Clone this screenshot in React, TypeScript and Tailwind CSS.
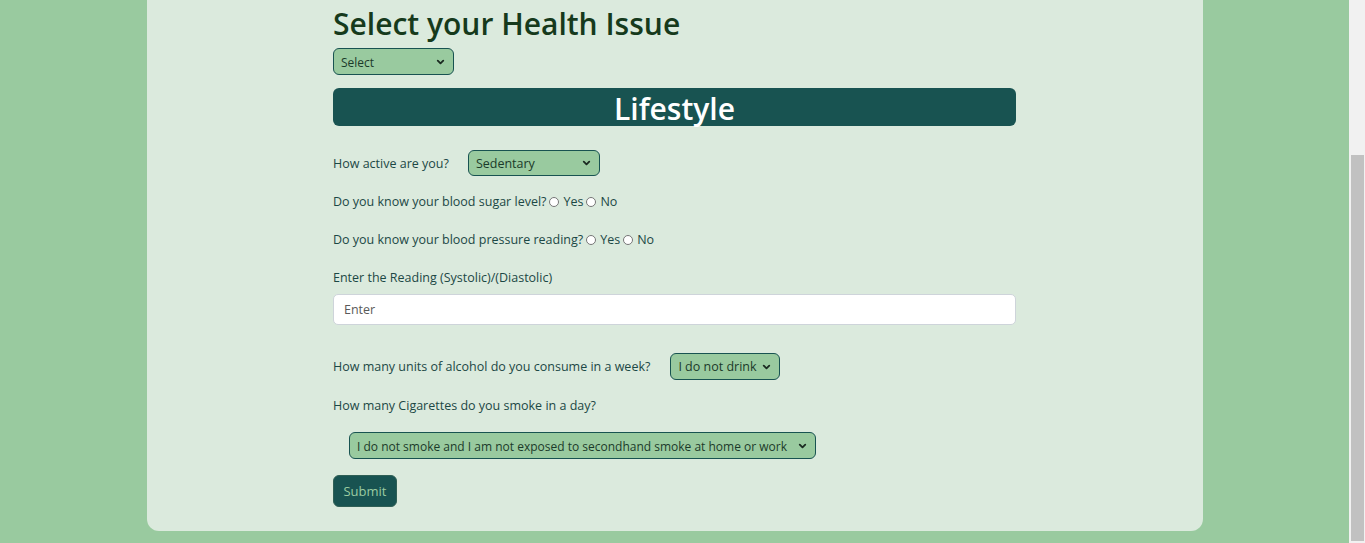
import { ChevronDown } from 'lucide-react';

const font = { fontFamily: '"Segoe UI", "Open Sans", sans-serif' };

const Dropdown = ({ value, options, className }: { value: string; options: string[]; className: string }) => (
  <div className={`relative ${className}`}>
    <select
      defaultValue={value}
      className="w-full h-full appearance-none bg-[#99ca9f] border border-[#185351] rounded-[6px] pl-[7px] pr-[20px] pt-[2px] text-[#1b3a2a] outline-none"
    >
      {options.map((o) => (
        <option key={o}>{o}</option>
      ))}
    </select>
    <ChevronDown
      className="absolute right-[8px] top-1/2 -translate-y-1/2 w-[11px] h-[11px] text-[#1b2b22] pointer-events-none"
      strokeWidth={4}
    />
  </div>
);

const Radio = ({ name, label }: { name: string; label: string }) => (
  <label className="inline-flex items-center">
    <input
      type="radio"
      name={name}
      className="appearance-none w-[10px] h-[10px] rounded-full border border-[#767676] bg-white mx-[3px] -mt-[1px]"
    />
    <span className="ml-[1px]">{label}</span>
  </label>
);

export default function App() {
  return (
    <div className="flex h-[543px] overflow-hidden" style={font}>
      <div className="flex-1 bg-[#99ca9f]">
        <div className="mx-auto w-[1056px] bg-[#dbeadd] rounded-b-[12px] pb-[24px]">
          <div className="mx-auto w-[683px] text-[12.5px] text-[#1c4845]">
            <h1 className="text-[30px] leading-[46px] font-semibold text-[#163a1c] pt-[1px] -mb-[1px]">Select your Health Issue</h1>

            <Dropdown value="Select" options={['Select', 'Diabetes', 'Hypertension']} className="mt-[2px] w-[121px] h-[27px] text-[12px]" />

            <div className="mt-[13px] h-[38px] bg-[#185351] rounded-[6px] flex items-center justify-center">
              <h2 className="text-[30px] font-semibold text-white leading-none mt-[4px]">Lifestyle</h2>
            </div>

            <div className="mt-[24px] h-[26px] flex items-center gap-[19px] pt-[2px]">
              <span>How active are you?</span>
              <Dropdown value="Sedentary" options={['Sedentary', 'Lightly active', 'Active', 'Very active']} className="w-[132px] h-[26px] text-[12.5px] -mt-[2px]" />
            </div>

            <div className="mt-[16px] h-[20px] flex items-center pt-[1px]">
              <span>Do you know your blood sugar level?</span>
              <Radio name="sugar" label="Yes" />
              <Radio name="sugar" label="No" />
            </div>

            <div className="mt-[18px] h-[20px] flex items-center pt-[1px]">
              <span>Do you know your blood pressure reading?</span>
              <Radio name="pressure" label="Yes" />
              <Radio name="pressure" label="No" />
            </div>

            <div className="mt-[18px] h-[20px] flex items-center pt-[1px]">Enter the Reading (Systolic)/(Diastolic)</div>

            <input
              placeholder="Enter"
              className="mt-[6px] w-full h-[31px] bg-white border border-[#ced4da] rounded-[5px] px-[10px] text-[12.5px] placeholder:text-[#5a5a5a] outline-none"
            />

            <div className="mt-[28px] h-[27px] flex items-center gap-[20px]">
              <span className="pt-[2px]">How many units of alcohol do you consume in a week?</span>
              <Dropdown value="I do not drink" options={['I do not drink', '1-7 units', '8-14 units', 'More than 14']} className="w-[110px] h-[27px] text-[12.5px]" />
            </div>

            <div className="mt-[16px] h-[20px] flex items-center pt-[1px]">How many Cigarettes do you smoke in a day?</div>

            <Dropdown
              value="I do not smoke and I am not exposed to secondhand smoke at home or work"
              options={['I do not smoke and I am not exposed to secondhand smoke at home or work', '1-10 a day', 'More than 10 a day']}
              className="mt-[16px] ml-[16px] w-[467px] h-[27px] text-[12px]"
            />

            <button className="mt-[16px] w-[64px] h-[32px] bg-[#185351] border border-[#2f5f55] rounded-[6px] text-[#9bcba1] text-[13px] pt-[1px]">
              Submit
            </button>
          </div>
        </div>
      </div>
      <div className="w-[16px] bg-[#f1f1f1] flex flex-col pt-[155px] pb-[2px] px-[1px]">
        <div className="flex-1 bg-[#c1c1c1] ml-[1px]" />
      </div>
    </div>
  );
}
